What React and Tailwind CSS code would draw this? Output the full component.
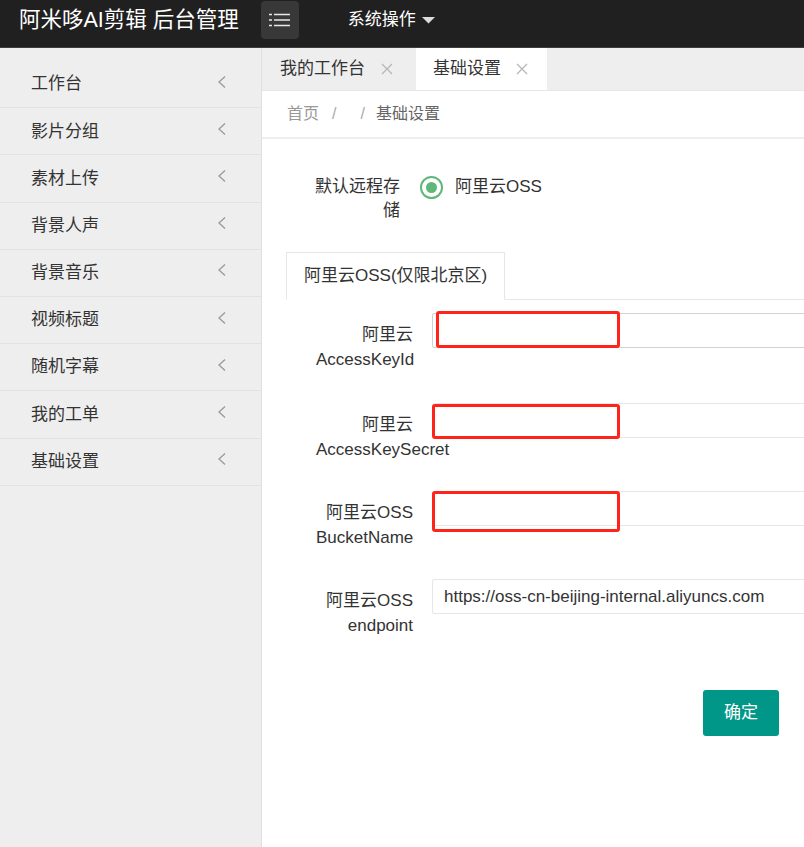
import React from 'react'

const menus = ['工作台', '影片分组', '素材上传', '背景人声', '背景音乐', '视频标题', '随机字幕', '我的工单', '基础设置']

const Chevron = () => (
    <svg width="10" height="14" viewBox="0 0 10 14" className="mb-[5px]">
        <polyline points="8,1.5 2,7 8,12.5" fill="none" stroke="#9a9a9a" strokeWidth="1.3" />
    </svg>
)

const Close = () => (
    <svg width="12" height="12" viewBox="0 0 12 12">
        <path d="M1 1 L11 11 M11 1 L1 11" stroke="#b5b5b5" strokeWidth="1.2" />
    </svg>
)

const Field = ({ top, bottom, value, box, first }) => (
    <div className={`flex items-start ${first ? 'h-[90px]' : 'h-[88px]'}`}>
        <div className="ml-[30px] w-[97px] shrink-0 pt-[9px] text-right leading-[25px]">
            <div>{top}</div>
            <div>{bottom}</div>
        </div>
        <div className="relative ml-[19px] shrink-0">
            <input
                readOnly
                value={value || ''}
                className={`h-[35px] w-[420px] rounded-[2px] border bg-white pl-[11px] text-[17px] text-[#333] outline-none ${first ? 'border-[#d2d2d2]' : 'border-[#e6e6e6]'}`}
            />
            {box}
        </div>
    </div>
)

const RedBox = ({ className }) => (
    <div className={`pointer-events-none absolute rounded-[3px] border-[3px] border-[#ff2419] ${className}`} />
)

export default function App() {
    return (
        <div className="h-[847px] w-[804px] overflow-hidden bg-white text-[17px] text-[#333] font-['Liberation_Sans','Noto_Sans_CJK_SC',sans-serif]">
            {/* header */}
            <div className="h-[48px] border-b border-[#3d3d3d] bg-[#202020]">
                <div className="flex h-[40px] items-center">
                    <div className="ml-[19px] text-[21.5px] text-white">阿米哆AI剪辑 后台管理</div>
                    <div className="ml-[22px] flex h-[38px] w-[38px] items-center justify-center rounded-[4px] bg-[#383838]">
                        <svg width="22" height="14" viewBox="0 0 22 14">
                            <path d="M0 1.5 H3 M5 1.5 H21 M0 7 H3 M5 7 H21 M0 12.5 H3 M5 12.5 H21" stroke="#e8e8e8" strokeWidth="1.6" />
                        </svg>
                    </div>
                    <div className="ml-[49px] text-[17px] text-white">系统操作</div>
                    <svg width="13" height="7" viewBox="0 0 13 7" className="ml-[6px]">
                        <polygon points="0,0 13,0 6.5,6.5" fill="#dcdcdc" />
                    </svg>
                </div>
            </div>

            <div className="flex h-[799px]">
                {/* sidebar */}
                <div className="w-[262px] shrink-0 border-r border-[#e0e0e0] bg-[#eeeeee] pt-[13px]">
                    {menus.map((m) => (
                        <div key={m} className="flex h-[47.2px] items-center justify-between border-b border-[#e2e2e2] pl-[31px] pr-[34px] text-[17px] text-[#333]">
                            <span>{m}</span>
                            <Chevron />
                        </div>
                    ))}
                </div>

                {/* main */}
                <div className="flex-1 overflow-hidden">
                    <div className="flex h-[43px] items-end border-b border-[#e6e6e6] bg-[#eeeeee]">
                        <div className="flex h-[42px] items-center pl-[18px] pr-[23px]">
                            <span>我的工作台</span>
                            <span className="ml-[16px] flex"><Close /></span>
                        </div>
                        <div className="flex h-[42px] items-center bg-white pl-[17px] pr-[19px]">
                            <span>基础设置</span>
                            <span className="ml-[15px] flex"><Close /></span>
                        </div>
                    </div>

                    <div className="flex h-[48px] items-center border-b-2 border-[#eeeeee] pl-[25px] text-[16px]">
                        <span className="text-[#999]">首页</span>
                        <span className="ml-[13px] text-[#aaa]">/</span>
                        <span className="ml-[24px] text-[#aaa]">/</span>
                        <span className="ml-[11px] text-[#666]">基础设置</span>
                    </div>

                    <div className="pl-[24px] pt-[36px]">
                        <div className="flex items-start">
                            <div className="w-[90px] ml-[24px] shrink-0 text-right leading-[24px]">默认远程存储</div>
                            <div className="ml-[20px] flex h-[24px] items-center">
                                <div className="flex h-[23px] w-[23px] items-center justify-center rounded-full border-2 border-[#5fb878]">
                                    <div className="h-[11px] w-[11px] rounded-full bg-[#5fb878]" />
                                </div>
                                <span className="ml-[12px]">阿里云OSS</span>
                            </div>
                        </div>

                        <div className="mt-[29px] flex border-b border-[#e6e6e6]">
                            <div className="-mb-px flex h-[48px] items-center border border-b-white border-[#e6e6e6] bg-white px-[17px]">
                                阿里云OSS(仅限北京区)
                            </div>
                        </div>

                        <div className="-ml-[24px] pt-[13px] pl-[24px]">
                            <Field first top="阿里云" bottom="AccessKeyId" box={<RedBox className="left-[4px] -top-[2px] h-[37px] w-[184px]" />} />
                            <Field top="阿里云" bottom="AccessKeySecret" box={<RedBox className="left-0 top-[1px] h-[35px] w-[188px]" />} />
                            <Field top="阿里云OSS" bottom="BucketName" box={<RedBox className="left-0 top-0 h-[41px] w-[188px]" />} />
                            <Field top="阿里云OSS" bottom="endpoint" value="https://oss-cn-beijing-internal.aliyuncs.com" />
                        </div>

                        <div className="ml-[417px] mt-[23px]">
                            <button className="h-[46px] w-[76px] rounded-[3px] bg-[#009688] text-[17px] text-white">确定</button>
                        </div>
                    </div>
                </div>
            </div>
        </div>
    )
}
